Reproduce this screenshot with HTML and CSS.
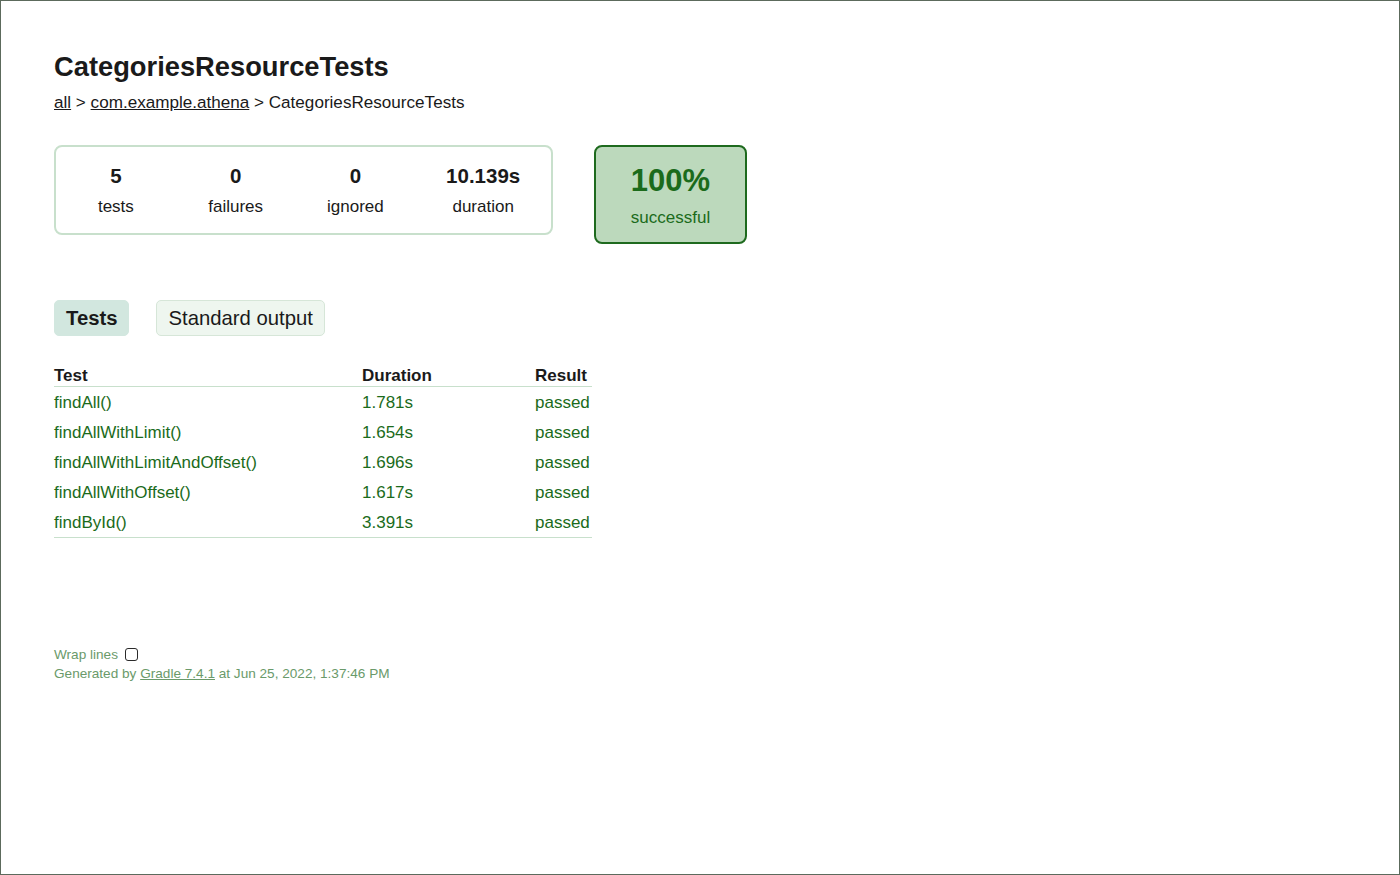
FILE: index.html
```html
<!DOCTYPE html>
<html>
<head>
<meta charset="utf-8">
<link rel="stylesheet" href="styles.css">
</head>
<body>
<div class="frame">
  <div class="content">
    <h1 class="title">CategoriesResourceTests</h1>
    <div class="breadcrumbs"><a href="#">all</a> &gt; <a href="#">com.example.athena</a> &gt; CategoriesResourceTests</div>
    <div class="summary-row">
      <div class="summary">
        <div class="counter"><div class="num">5</div><div class="lbl">tests</div></div>
        <div class="counter"><div class="num">0</div><div class="lbl">failures</div></div>
        <div class="counter"><div class="num">0</div><div class="lbl">ignored</div></div>
        <div class="counter"><div class="num">10.139s</div><div class="lbl">duration</div></div>
      </div>
      <div class="success">
        <div class="pct">100%</div>
        <div class="pct-lbl">successful</div>
      </div>
    </div>
    <div class="tabs">
      <span class="tab active">Tests</span>
      <span class="tab">Standard output</span>
    </div>
    <table class="tests">
      <thead>
        <tr><th class="c1">Test</th><th class="c2">Duration</th><th class="c3">Result</th></tr>
      </thead>
      <tbody>
        <tr><td>findAll()</td><td>1.781s</td><td>passed</td></tr>
        <tr><td>findAllWithLimit()</td><td>1.654s</td><td>passed</td></tr>
        <tr><td>findAllWithLimitAndOffset()</td><td>1.696s</td><td>passed</td></tr>
        <tr><td>findAllWithOffset()</td><td>1.617s</td><td>passed</td></tr>
        <tr><td>findById()</td><td>3.391s</td><td>passed</td></tr>
      </tbody>
    </table>
    <div class="footer">
      <div class="wrap">Wrap lines <span class="check"></span></div>
      <div class="gen">Generated by <a href="#">Gradle 7.4.1</a> at Jun 25, 2022, 1:37:46 PM</div>
    </div>
  </div>
</div>
</body>
</html>
```
FILE: styles.css
```css
html, body {
  margin: 0;
  padding: 0;
  background: #fff;
}
body {
  font-family: "Liberation Sans", Arial, sans-serif;
  color: #1a1a1a;
}
.frame {
  width: 1400px;
  height: 875px;
  box-sizing: border-box;
  border: 1px solid #5c6a5c;
}
.content {
  padding: 49px 53px 0;
}
.title {
  margin: 0;
  font-size: 27.3px;
  font-weight: bold;
  line-height: 34px;
  color: #1a1a1a;
}
.breadcrumbs {
  margin-top: 9px;
  font-size: 17.1px;
  line-height: 20px;
  color: #1a1a1a;
}
.breadcrumbs a {
  color: #1a1a1a;
  text-decoration: underline;
}
.summary-row {
  display: flex;
  align-items: flex-start;
  gap: 41px;
  margin-top: 32px;
}
.summary {
  width: 499px;
  height: 90px;
  box-sizing: border-box;
  border: 2px solid #c8e0cc;
  border-radius: 8px;
  display: flex;
}
.counter {
  text-align: center;
  width: 120px;
}
.counter:last-child {
  width: 136px;
}
.num {
  font-size: 20.5px;
  font-weight: bold;
  margin-top: 17px;
  line-height: 24px;
}
.lbl {
  font-size: 17px;
  line-height: 20px;
  margin-top: 9px;
}
.success {
  width: 153px;
  height: 99px;
  box-sizing: border-box;
  background: #bcd9bc;
  border: 2px solid #1e6a1e;
  border-radius: 8px;
  text-align: center;
  color: #1b6b1b;
}
.pct {
  font-size: 31px;
  font-weight: bold;
  line-height: 36px;
  margin-top: 16px;
}
.pct-lbl {
  font-size: 17px;
  line-height: 20px;
  margin-top: 9px;
}
.tabs {
  display: flex;
  gap: 27px;
  margin-top: 56px;
}
.tab {
  display: inline-block;
  height: 36px;
  box-sizing: border-box;
  line-height: 34px;
  padding: 0 11px;
  font-size: 20.3px;
  border-radius: 5px;
  border: 1px solid #d6e6d8;
  background: #eef6ef;
  color: #1a1a1a;
}
.tab.active {
  font-weight: bold;
  background: #d2e7df;
  border-color: #d2e7df;
}
.tests {
  margin-top: 27px;
  width: 538px;
  border-collapse: collapse;
  font-size: 17px;
}
.tests th {
  text-align: left;
  font-weight: bold;
  padding: 0;
  height: 23px;
  vertical-align: bottom;
  line-height: 20px;
  border-bottom: 1px solid #c8e0cc;
}
.tests th.c1 { width: 308px; }
.tests th.c2 { width: 173px; }
.tests td {
  padding: 1px 0 0;
  height: 29px;
  line-height: 20px;
  color: #1b6b1b;
}
.tests tbody tr:last-child td {
  border-bottom: 1px solid #c8e0cc;
}
.footer {
  margin-top: 107px;
  font-size: 13.6px;
  line-height: 19px;
  color: #6a9a6a;
}
.wrap {
  display: flex;
  align-items: center;
  gap: 7px;
}
.check {
  display: inline-block;
  width: 11px;
  height: 11px;
  border: 1px solid #2a2a2a;
  border-radius: 3px;
}
.gen a {
  color: #6a9a6a;
  text-decoration: underline;
}
```
